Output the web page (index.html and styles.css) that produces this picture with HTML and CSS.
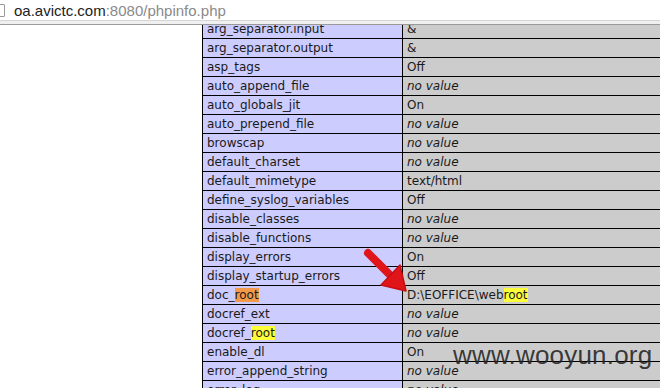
FILE: index.html
```html
<!DOCTYPE html>
<html>
<head>
<meta charset="utf-8">
<link rel="stylesheet" href="styles.css">
</head>
<body>
<div class="bar">
  <span class="page-icon"></span>
  <span class="url"><span class="host">oa.avictc.com</span><span class="path">:8080/phpinfo.php</span></span>
</div>
<div class="sep"></div>
<div class="view">
  <table class="info">
    <tr><td class="e">arg_separator.input</td><td class="v">&amp;</td></tr>
    <tr><td class="e">arg_separator.output</td><td class="v">&amp;</td></tr>
    <tr><td class="e">asp_tags</td><td class="v">Off</td></tr>
    <tr><td class="e">auto_append_file</td><td class="v"><i>no value</i></td></tr>
    <tr><td class="e">auto_globals_jit</td><td class="v">On</td></tr>
    <tr><td class="e">auto_prepend_file</td><td class="v"><i>no value</i></td></tr>
    <tr><td class="e">browscap</td><td class="v"><i>no value</i></td></tr>
    <tr><td class="e">default_charset</td><td class="v"><i>no value</i></td></tr>
    <tr><td class="e">default_mimetype</td><td class="v">text/html</td></tr>
    <tr><td class="e">define_syslog_variables</td><td class="v">Off</td></tr>
    <tr><td class="e">disable_classes</td><td class="v"><i>no value</i></td></tr>
    <tr><td class="e">disable_functions</td><td class="v"><i>no value</i></td></tr>
    <tr><td class="e">display_errors</td><td class="v">On</td></tr>
    <tr><td class="e">display_startup_errors</td><td class="v">Off</td></tr>
    <tr><td class="e">doc_<span class="hl-orange">root</span></td><td class="v">D:\EOFFICE\web<span class="hl-yellow">root</span></td></tr>
    <tr><td class="e">docref_ext</td><td class="v"><i>no value</i></td></tr>
    <tr><td class="e">docref_<span class="hl-yellow">root</span></td><td class="v"><i>no value</i></td></tr>
    <tr><td class="e">enable_dl</td><td class="v">On</td></tr>
    <tr><td class="e">error_append_string</td><td class="v"><i>no value</i></td></tr>
    <tr><td class="e">error_log</td><td class="v"><i>no value</i></td></tr>
  </table>
  <svg class="arrow" width="60" height="55" viewBox="0 0 60 55">
    <line x1="13" y1="8" x2="37" y2="32" stroke="#e0151a" stroke-width="8" stroke-linecap="round"/>
    <polygon points="45,20 51,46 26,40" fill="#e0151a" stroke="#c80e12" stroke-width="1.5" stroke-linejoin="round"/>
  </svg>
  <div class="watermark">www.wooyun.org</div>
</div>
</body>
</html>
```
FILE: styles.css
```css
html, body {
  margin: 0;
  padding: 0;
  background: #fff;
  width: 660px;
  height: 388px;
  overflow: hidden;
}
.bar {
  height: 20px;
  display: flex;
  align-items: center;
  font-family: "Liberation Sans", Arial, sans-serif;
  font-size: 15px;
  background: #fff;
}
.page-icon {
  display: block;
  width: 8px;
  height: 11px;
  margin-left: -5px;
  margin-right: 9px;
  border: 1px solid #999;
  border-radius: 1px;
}
.host { color: #222; }
.path { color: #8a8a8a; }
.sep {
  height: 3px;
  border-top: 1px solid #d6d6d6;
  background: #efefef;
  border-bottom: 1px solid #9a9a9a;
}
.view {
  position: relative;
  height: 363px;
  overflow: hidden;
}
.info {
  border-collapse: collapse;
  margin-left: 202px;
  margin-top: -6px;
  width: 640px;
  font-family: "DejaVu Sans", Verdana, sans-serif;
  font-size: 12px;
  color: #1a1a1a;
}
.info td {
  border: 1px solid #000;
  height: 18px;
  padding: 0 4px;
  line-height: 18px;
  white-space: nowrap;
  box-sizing: border-box;
}
.info td.e {
  width: 200px;
  background: #ccccff;
}
.info td.v {
  background: #cccccc;
}
.hl-orange { background: #f29a4a; }
.hl-yellow { background: #fdfd3a; }
.arrow {
  position: absolute;
  left: 355px;
  top: 220px;
}
.watermark {
  position: absolute;
  left: 453px;
  top: 315px;
  font-family: "Liberation Sans", Arial, sans-serif;
  font-size: 26px;
  color: rgba(35, 35, 35, 0.88);
  letter-spacing: 0.2px;
}
```
